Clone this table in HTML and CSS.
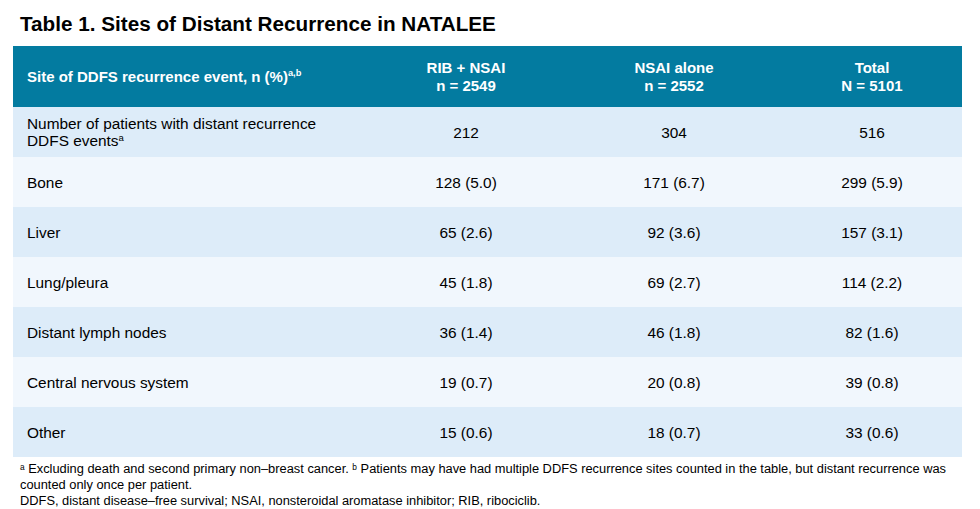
FILE: index.html
```html
<!DOCTYPE html>
<html lang="en">
<head>
<meta charset="utf-8">
<title>Table 1. Sites of Distant Recurrence in NATALEE</title>
<link rel="stylesheet" href="styles.css">
</head>
<body>
<div class="page">
  <h1 class="title">Table 1. Sites of Distant Recurrence in NATALEE</h1>
  <table class="data">
    <colgroup>
      <col class="c1"><col class="c2"><col class="c3"><col class="c4">
    </colgroup>
    <thead>
      <tr>
        <th class="left">Site of DDFS recurrence event, n (%)<sup>a,b</sup></th>
        <th>RIB + NSAI<br>n = 2549</th>
        <th>NSAI alone<br>n = 2552</th>
        <th>Total<br>N = 5101</th>
      </tr>
    </thead>
    <tbody>
      <tr class="dark">
        <td class="left">Number of patients with distant recurrence<br>DDFS events<sup>a</sup></td>
        <td>212</td><td>304</td><td>516</td>
      </tr>
      <tr class="light">
        <td class="left">Bone</td><td>128 (5.0)</td><td>171 (6.7)</td><td>299 (5.9)</td>
      </tr>
      <tr class="dark">
        <td class="left">Liver</td><td>65 (2.6)</td><td>92 (3.6)</td><td>157 (3.1)</td>
      </tr>
      <tr class="light">
        <td class="left">Lung/pleura</td><td>45 (1.8)</td><td>69 (2.7)</td><td>114 (2.2)</td>
      </tr>
      <tr class="dark">
        <td class="left">Distant lymph nodes</td><td>36 (1.4)</td><td>46 (1.8)</td><td>82 (1.6)</td>
      </tr>
      <tr class="light">
        <td class="left">Central nervous system</td><td>19 (0.7)</td><td>20 (0.8)</td><td>39 (0.8)</td>
      </tr>
      <tr class="dark">
        <td class="left">Other</td><td>15 (0.6)</td><td>18 (0.7)</td><td>33 (0.6)</td>
      </tr>
    </tbody>
  </table>
  <div class="notes">
    <p><sup>a</sup> Excluding death and second primary non–breast cancer. <sup>b</sup> Patients may have had multiple DDFS recurrence sites counted in the table, but distant recurrence was<br>counted only once per patient.</p>
    <p>DDFS, distant disease–free survival; NSAI, nonsteroidal aromatase inhibitor; RIB, ribociclib.</p>
  </div>
</div>
</body>
</html>
```

FILE: styles.css
```css
html, body {
  margin: 0;
  padding: 0;
  background: #ffffff;
}

body {
  font-family: "Liberation Sans", Arial, sans-serif;
  color: #000000;
}

.page {
  width: 980px;
  height: 509px;
  overflow: hidden;
}

.title {
  margin: 0;
  padding: 12px 0 0 20px;
  height: 46px;
  box-sizing: border-box;
  font-size: 20.7px;
  line-height: 24px;
  font-weight: bold;
}

.data {
  margin-left: 13px;
  width: 949px;
  border-collapse: collapse;
  table-layout: fixed;
}

.c1 { width: 353px; }
.c2 { width: 200px; }
.c3 { width: 216px; }
.c4 { width: 180px; }

.data th {
  background: #037ba0;
  color: #ffffff;
  height: 61px;
  padding: 0;
  font-size: 15px;
  line-height: 18px;
  font-weight: bold;
  text-align: center;
  vertical-align: middle;
}

.data td {
  height: 50px;
  padding: 0;
  font-size: 15.4px;
  line-height: 17px;
  text-align: center;
  vertical-align: middle;
}

.data .left {
  text-align: left;
  padding-left: 14px;
}

.dark td { background: #ddecf9; }
.light td { background: #f1f7fd; }

sup {
  display: inline-block;
  font-size: 0.62em;
  line-height: 1;
  vertical-align: top;
  margin-top: 1px;
}

.notes {
  padding: 4px 0 0 20px;
  font-size: 12.85px;
  line-height: 16px;
}

.notes p {
  margin: 0;
  width: 955px;
}

.notes sup {
  font-size: 0.65em;
  margin-top: 2px;
}
```
